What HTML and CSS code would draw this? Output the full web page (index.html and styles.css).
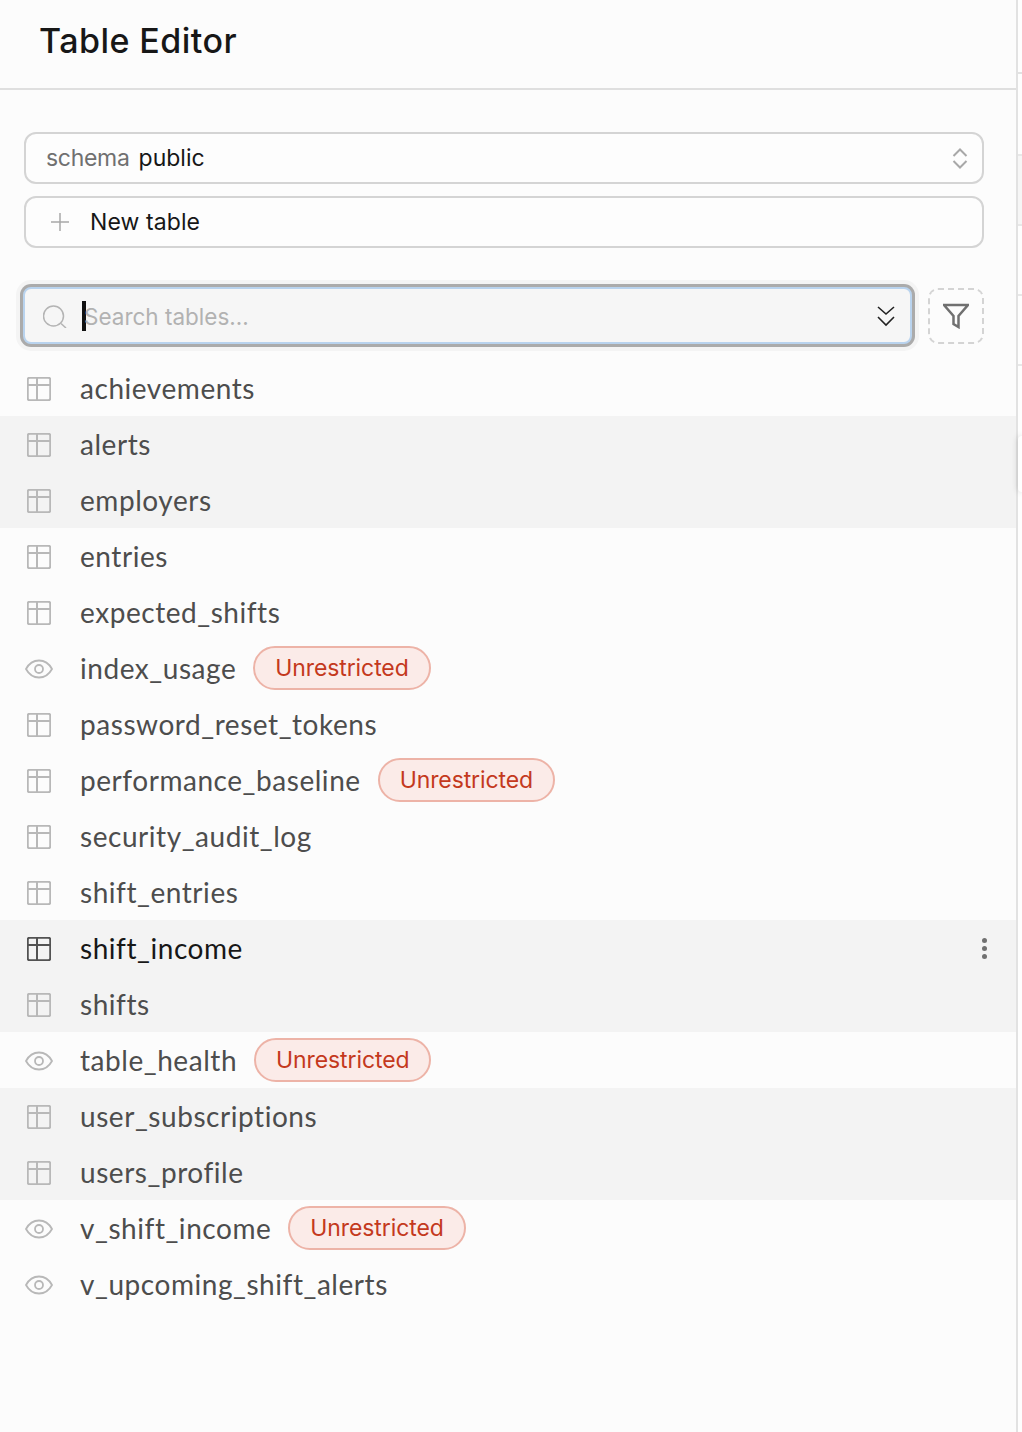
FILE: index.html
```html
<!DOCTYPE html>
<html>
<head>
    <meta charset="utf-8" />
    <meta name="viewport" content="width=device-width, initial-scale=1" />
    <title>Table Editor</title>
    <link rel="stylesheet" href="styles.css">
</head>
<body>
    <svg class="sprite" width="0" height="0">
        <symbol id="i-table" viewBox="0 0 24 24">
            <rect x="0.75" y="0.75" width="22.5" height="22.5" rx="2" />
            <path d="M0.75 8h22.5M10 0.75v22.5" />
        </symbol>
        <symbol id="i-eye" viewBox="0 0 28 20">
            <path d="M1 10c3-5.500 7.500-8.500 13-8.500s10 3 13 8.500c-3 5.500-7.500 8.500-13 8.500s-10-3-13-8.500z" />
            <circle cx="14" cy="10" r="4" />
        </symbol>
    </svg>
    <div class="app">
        <aside class="sidebar">
            <div class="header">
                <h1>Table Editor</h1>
            </div>
            <div class="controls">
                <button class="control">
                    <span class="muted">schema</span>
                    <span>public</span>
                    <svg class="updown" width="16" height="24" viewBox="0 0 16 24"><path d="M1.500 10 8 3.500l6.500 6.500M1.500 15 8 21.500l6.500-6.500" /></svg>
                </button>
                <button class="control new-table">
                    <svg class="plus" width="20" height="20" viewBox="0 0 20 20"><path d="M10 1v18M1 10h18" /></svg>
                    <span>New table</span>
                </button>
            </div>
            <div class="search-row">
                <div class="search-box">
                    <svg class="search-icon" width="24" height="24" viewBox="0 0 24 24"><circle cx="10.500" cy="12" r="10" /><path d="M18 19.500l5 4.500" /></svg>
                    <span class="caret"></span>
                    <span class="placeholder">Search tables...</span>
                    <svg class="chevrons" width="18" height="22" viewBox="0 0 18 22"><path d="M1 2l8 7 8-7M1 12l8 8 8-8" /></svg>
                </div>
                <button class="filter">
                    <svg width="26" height="26" viewBox="0 0 26 26"><path d="M1 2h24l-9.500 11v11l-5-3v-8z" /></svg>
                </button>
            </div>
            <ul class="tables">
                <li class="row"><svg class="icon"><use href="#i-table" /></svg><span class="name">achievements</span></li>
                <li class="row shaded"><svg class="icon"><use href="#i-table" /></svg><span class="name">alerts</span></li>
                <li class="row shaded"><svg class="icon"><use href="#i-table" /></svg><span class="name">employers</span></li>
                <li class="row"><svg class="icon"><use href="#i-table" /></svg><span class="name">entries</span></li>
                <li class="row"><svg class="icon"><use href="#i-table" /></svg><span class="name">expected_shifts</span></li>
                <li class="row"><svg class="icon eye"><use href="#i-eye" /></svg><span class="name">index_usage</span><span class="badge">Unrestricted</span></li>
                <li class="row"><svg class="icon"><use href="#i-table" /></svg><span class="name">password_reset_tokens</span></li>
                <li class="row"><svg class="icon"><use href="#i-table" /></svg><span class="name">performance_baseline</span><span class="badge">Unrestricted</span></li>
                <li class="row"><svg class="icon"><use href="#i-table" /></svg><span class="name">security_audit_log</span></li>
                <li class="row"><svg class="icon"><use href="#i-table" /></svg><span class="name">shift_entries</span></li>
                <li class="row shaded active">
                    <svg class="icon"><use href="#i-table" /></svg><span class="name">shift_income</span>
                    <span class="more"><i></i><i></i><i></i></span>
                </li>
                <li class="row shaded"><svg class="icon"><use href="#i-table" /></svg><span class="name">shifts</span></li>
                <li class="row"><svg class="icon eye"><use href="#i-eye" /></svg><span class="name">table_health</span><span class="badge">Unrestricted</span></li>
                <li class="row shaded"><svg class="icon"><use href="#i-table" /></svg><span class="name">user_subscriptions</span></li>
                <li class="row shaded"><svg class="icon"><use href="#i-table" /></svg><span class="name">users_profile</span></li>
                <li class="row"><svg class="icon eye"><use href="#i-eye" /></svg><span class="name">v_shift_income</span><span class="badge">Unrestricted</span></li>
                <li class="row"><svg class="icon eye"><use href="#i-eye" /></svg><span class="name">v_upcoming_shift_alerts</span></li>
            </ul>
        </aside>
        <div class="edge">
            <div class="edge-head"></div>
            <div class="edge-cell"></div>
            <div class="edge-cell tinted"></div>
            <div class="edge-cell"></div>
            <div class="edge-cell"></div>
            <div class="edge-panel"></div>
        </div>
    </div>
</body>
</html>
```
FILE: styles.css
```css
* {
    box-sizing: border-box;
}

html, body {
    height: 100%;
}

body {
    margin: 0;
    background-color: #fcfcfc;
    color: #171717;
    font-family: 'Inter', 'Noto Sans', sans-serif;
    font-size: 25px;
    overflow: hidden;
}

.sprite {
    position: absolute;
}

.app {
    display: flex;
    height: 100%;
}

.sidebar {
    width: 1018px;
    flex-shrink: 0;
    border-right: 2px solid #e2e2e2;
}

.edge {
    flex: 1;
    min-width: 0;
    background-color: #fefefe;
}

.edge-head {
    height: 74px;
    border-bottom: 2px solid #e2e2e2;
}

.edge-cell {
    height: 70px;
    border-bottom: 2px solid #e8e8e8;
}

.edge-cell:nth-child(2) {
    height: 82px;
}

.edge-cell.tinted {
    background-color: #f6f6f6;
}

.edge-panel {
    height: 56px;
    margin-top: 70px;
    background-color: #ffffff;
    border-radius: 12px 0 0 12px;
    box-shadow: 0 0 6px rgba(0, 0, 0, 0.2);
}

.header {
    height: 90px;
    padding: 0 39px;
    display: flex;
    align-items: center;
    border-bottom: 2px solid #dfdfdf;
}

.header h1 {
    margin: 0 0 8px;
    font-size: 34px;
    font-weight: 500;
    letter-spacing: 0.45px;
}

.controls {
    padding: 42px 32px 0 24px;
    display: flex;
    flex-direction: column;
    gap: 12px;
}

.control {
    height: 52px;
    padding: 0 20px;
    display: flex;
    align-items: center;
    gap: 9px;
    background-color: #fdfdfd;
    border: 2px solid #d4d4d4;
    border-radius: 12px;
    color: #171717;
    font-family: inherit;
    font-size: 23px;
}

.muted {
    color: #707070;
    letter-spacing: -0.3px;
}

.updown {
    margin-left: auto;
    margin-right: -6px;
    fill: none;
    stroke: #a8a8a8;
    stroke-width: 2;
}

.new-table {
    gap: 20px;
    padding-left: 24px;
    letter-spacing: 0.1px;
}

.plus {
    fill: none;
    stroke: #a8a8a8;
    stroke-width: 1.500;
}

.search-row {
    padding: 39px 32px 0 23px;
    display: flex;
    align-items: flex-start;
    gap: 16px;
}

.search-box {
    flex: 1;
    height: 57px;
    padding: 0 15px 0 18px;
    display: flex;
    align-items: center;
    background-color: #f6f6f6;
    border: 2px solid #b9d3ee;
    border-radius: 8px;
    box-shadow: 0 0 0 3px #ababab, 0 0 0 7px #f4f4f4;
}

.search-icon {
    flex-shrink: 0;
    fill: none;
    stroke: #b4b4b4;
    stroke-width: 1.500;
}

.caret {
    width: 4px;
    height: 30px;
    margin-left: 15px;
    background-color: #111111;
}

.placeholder {
    margin-left: -2px;
    margin-top: 2px;
    color: #b2b2b2;
    font-size: 22.500px;
}

.chevrons {
    margin-left: auto;
    fill: none;
    stroke: #222222;
    stroke-width: 1.600;
}

.filter {
    width: 56px;
    height: 56px;
    margin-top: 1px;
    padding: 0;
    display: flex;
    align-items: center;
    justify-content: center;
    background: transparent;
    border: 2px dashed #d4d4d4;
    border-radius: 10px;
}

.filter svg {
    fill: none;
    stroke: #707070;
    stroke-width: 2.500;
}

.tables {
    margin: 16px 0 0;
    padding: 0;
    list-style: none;
}

.row {
    height: 56px;
    padding: 0 32px 0 27px;
    display: flex;
    align-items: center;
    color: #4d4d4d;
}

.row.shaded {
    background-color: #f3f3f3;
}

.row.active {
    color: #171717;
}

.icon {
    width: 24px;
    height: 24px;
    flex-shrink: 0;
    margin-top: 2px;
    margin-right: 29px;
    fill: none;
    stroke: #b8b8b8;
    stroke-width: 2;
}

.icon.eye {
    width: 28px;
    height: 20px;
    margin-left: -2px;
    margin-right: 27px;
    stroke-width: 1.800;
}

.active .icon {
    stroke: #525252;
}

.name {
    font-family: 'Lato', 'Inter', sans-serif;
    font-size: 28px;
    letter-spacing: 0.55px;
}

.badge {
    height: 44px;
    margin-left: 17px;
    padding: 0 20px;
    display: flex;
    align-items: center;
    background-color: #fbebe8;
    border: 2px solid #edb3a7;
    border-radius: 22px;
    color: #c4391d;
    font-size: 23px;
    letter-spacing: -0.1px;
}

.more {
    margin-left: auto;
    margin-right: -3px;
    display: flex;
    flex-direction: column;
    gap: 3px;
}

.more i {
    width: 5px;
    height: 5px;
    border-radius: 50%;
    background-color: #707070;
}
```
